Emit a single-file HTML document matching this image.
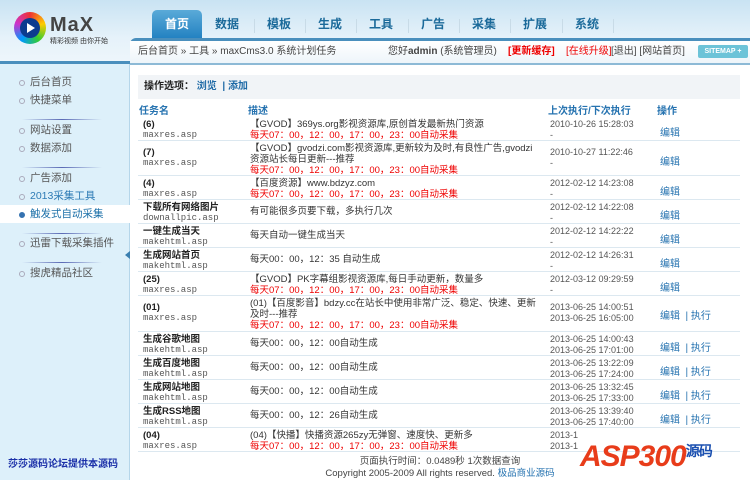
<!DOCTYPE html>
<html><head><meta charset="utf-8">
<style>
*{margin:0;padding:0;box-sizing:border-box}
body{width:750px;height:480px;overflow:hidden;font-family:"Liberation Sans","Noto Sans CJK SC",sans-serif;font-size:11px;color:#333;background:#fff;position:relative}
.hdr{position:absolute;left:0;top:0;width:750px;height:64px;background:linear-gradient(#c9e3f3,#e6f2fa 60%,#eef6fb)}
.logo{position:absolute;left:14px;top:12px;width:32px;height:32px;border-radius:50%;background:conic-gradient(#e33,#fc0,#3c3,#09f,#c3c,#e33)}
.logo i{position:absolute;left:6px;top:6px;width:20px;height:20px;border-radius:50%;background:#0c3b8f}
.logo b{position:absolute;left:13px;top:11px;border-left:8px solid #fff;border-top:5px solid transparent;border-bottom:5px solid transparent}
.lt{position:absolute;left:50px;top:14px;font:bold 20px "Liberation Sans",sans-serif;color:#444;letter-spacing:1px}
.ls{position:absolute;left:50px;top:36px;font-size:7px;color:#333}
.tabs{position:absolute;left:152px;top:10px;height:30px}
.tab{position:absolute;top:0;height:30px;line-height:28px;font-size:12px;font-weight:bold;color:#1b6a9a;text-align:center;width:50px}
.tab.on{background:linear-gradient(#5aaad8,#1f7fc0);color:#fff;border-radius:5px 5px 0 0}
.sep{position:absolute;top:9px;width:1px;height:14px;background:#c8dbe7}
.side{position:absolute;left:0;top:64px;width:130px;height:416px;background:#ddf0fa;border-right:1px solid #b5d6ea}
.lbar{position:absolute;left:0;top:61px;width:130px;height:4px;background:#4a8fbd}
.side ul{list-style:none;position:absolute;left:0;width:130px}
.side li{height:18px;line-height:18px;padding-left:30px;font-size:10.5px;color:#555;position:relative}
.side li:before{content:"";position:absolute;left:19px;top:7px;width:4px;height:4px;border:1px solid #aab;border-radius:50%}
.side li.on{background:#fff;color:#1a6fa8}
.side li.on:before{background:#3572b0;border-color:#3572b0}
.side li.bl{color:#2d7bb5}
.hr{position:absolute;left:22px;width:80px;height:1px;background:linear-gradient(90deg,transparent,#5a6ab5,transparent)}
.sbot{position:absolute;left:8px;top:455px;font-size:10px;font-weight:bold;color:#1a2fa8}
.arrow{position:absolute;left:125px;top:251px;border-right:5px solid #3a7fb0;border-top:4px solid transparent;border-bottom:4px solid transparent}
.main{position:absolute;left:130px;top:38px;width:620px;height:442px;background:#fff;border-top:3px solid #4a8fbd;border-radius:6px 0 0 0}
.bc{position:absolute;left:0;top:0;width:620px;height:24px;background:linear-gradient(#fff,#eef5fa);border-bottom:2px solid #8dbad6;line-height:22px;font-size:10px;color:#444}
.opt{position:absolute;left:8px;top:34px;width:602px;height:24px;background:#f1f4f7;line-height:24px;padding-left:6px;font-size:10px;font-weight:bold;color:#222}
.opt a{color:#1e6aa6}
.th{position:absolute;top:61px;font-size:10px;font-weight:bold;color:#2673b0}
.row{position:absolute;left:8px;width:602px;border-bottom:1px solid #dce8f0;font-size:9.5px}
.row div{position:absolute}
.n{left:5px;top:2px;line-height:11px;color:#222;font-weight:bold}
.n small{display:block;font-weight:normal;color:#555;font-size:9px;font-family:"Liberation Mono",monospace}
.d{left:112px;top:2px;width:290px;line-height:11px;color:#333}
.r{color:#e00}
.t{left:412px;top:2px;line-height:11px;color:#555;font-size:9px}
.o{left:522px;color:#2673b0;font-size:10px}
.foot{position:absolute;left:0;top:415px;width:620px;text-align:center;font-size:9.5px;color:#444;line-height:12px}
.asp{position:absolute;left:580px;top:440px;font:italic bold 30px "Liberation Sans",sans-serif;color:#e83c1a;letter-spacing:-1px}
</style></head><body>
<div class="hdr"></div>
<div class="logo"><i></i><b></b></div>
<div class="lt">MaX</div>
<div class="ls">精彩视频 由你开始</div>
<div class="tabs">
<div class="tab on" style="left:0">首页</div>
<div class="tab" style="left:50px">数据</div><div class="sep" style="left:102px"></div>
<div class="tab" style="left:102px">模板</div><div class="sep" style="left:153px"></div>
<div class="tab" style="left:153px">生成</div><div class="sep" style="left:204px"></div>
<div class="tab" style="left:204px">工具</div><div class="sep" style="left:256px"></div>
<div class="tab" style="left:256px">广告</div><div class="sep" style="left:307px"></div>
<div class="tab" style="left:307px">采集</div><div class="sep" style="left:358px"></div>
<div class="tab" style="left:358px">扩展</div><div class="sep" style="left:410px"></div>
<div class="tab" style="left:410px">系统</div><div class="sep" style="left:461px"></div>
</div>
<div class="lbar"></div>
<div class="side">
<ul style="top:9px"><li>后台首页</li><li>快捷菜单</li></ul>
<div class="hr" style="top:55px"></div>
<ul style="top:57px"><li>网站设置</li><li>数据添加</li></ul>
<div class="hr" style="top:103px"></div>
<ul style="top:105px"><li>广告添加</li><li class="bl">2013采集工具</li><li class="on">触发式自动采集</li></ul>
<div class="hr" style="top:169px"></div>
<ul style="top:170px"><li>迅雷下载采集插件</li></ul>
<div class="hr" style="top:198px"></div>
<ul style="top:200px"><li>搜虎精品社区</li></ul>
</div>
<div class="sbot">莎莎源码论坛提供本源码</div>
<div class="arrow"></div>
<div class="main">
<div class="bc"><span style="position:absolute;left:8px">后台首页 » 工具 » maxCms3.0 系统计划任务</span>
<span style="position:absolute;left:258px">您好<b>admin</b> (系统管理员)</span>
<span style="position:absolute;left:378px;color:#e00;font-weight:bold">[更新缓存]</span>
<span style="position:absolute;left:436px;color:#e00">[在线升级]</span>
<span style="position:absolute;left:481px">[退出] [网站首页]</span>
<span style="position:absolute;left:568px;top:4px;width:50px;height:13px;line-height:13px;background:#6cc3d8;color:#fff;font-size:7px;font-weight:bold;text-align:center;border-radius:2px">SITEMAP +</span></div>
<div class="opt">操作选项： <a>浏览</a> &nbsp;<a>|</a> <a>添加</a></div>
<div class="th" style="left:9px">任务名</div>
<div class="th" style="left:118px">描述</div>
<div class="th" style="left:418px">上次执行/下次执行</div>
<div class="th" style="left:527px">操作</div>

<div class="row" style="top:76px;height:24px"><div class="n">(6)<small>maxres.asp</small></div><div class="d">【GVOD】369ys.org影视资源库,原创首发最新热门资源<br><span class="r">每天07：00，12：00，17：00，23：00自动采集</span></div><div class="t">2010-10-26 15:28:03<br>-</div><div class="o" style="top:7px">编辑</div></div>
<div class="row" style="top:100px;height:35px"><div class="n" style="top:6px">(7)<small>maxres.asp</small></div><div class="d">【GVOD】gvodzi.com影视资源库,更新较为及时,有良性广告,gvodzi资源站长每日更新---推荐<br><span class="r">每天07：00，12：00，17：00，23：00自动采集</span></div><div class="t" style="top:6px">2010-10-27 11:22:46<br>-</div><div class="o" style="top:12px">编辑</div></div>
<div class="row" style="top:135px;height:24px"><div class="n">(4)<small>maxres.asp</small></div><div class="d">【百度资源】www.bdzyz.com<br><span class="r">每天07：00，12：00，17：00，23：00自动采集</span></div><div class="t">2012-02-12 14:23:08<br>-</div><div class="o" style="top:7px">编辑</div></div>
<div class="row" style="top:159px;height:24px"><div class="n">下载所有网络图片<small>downallpic.asp</small></div><div class="d" style="top:6px">有可能很多页要下载，多执行几次</div><div class="t">2012-02-12 14:22:08<br>-</div><div class="o" style="top:7px">编辑</div></div>
<div class="row" style="top:183px;height:24px"><div class="n">一键生成当天<small>makehtml.asp</small></div><div class="d" style="top:6px">每天自动一键生成当天</div><div class="t">2012-02-12 14:22:22<br>-</div><div class="o" style="top:7px">编辑</div></div>
<div class="row" style="top:207px;height:24px"><div class="n">生成网站首页<small>makehtml.asp</small></div><div class="d" style="top:6px">每天00：00，12：35 自动生成</div><div class="t">2012-02-12 14:26:31<br>-</div><div class="o" style="top:7px">编辑</div></div>
<div class="row" style="top:231px;height:24px"><div class="n">(25)<small>maxres.asp</small></div><div class="d">【GVOD】PK字幕组影视资源库,每日手动更新，数量多<br><span class="r">每天07：00，12：00，17：00，23：00自动采集</span></div><div class="t">2012-03-12 09:29:59<br>-</div><div class="o" style="top:7px">编辑</div></div>
<div class="row" style="top:255px;height:36px"><div class="n" style="top:6px">(01)<small>maxres.asp</small></div><div class="d">(01)【百度影音】bdzy.cc在站长中使用非常广泛、稳定、快速、更新及时---推荐<br><span class="r">每天07：00，12：00，17：00，23：00自动采集</span></div><div class="t" style="top:6px">2013-06-25 14:00:51<br>2013-06-25 16:05:00</div><div class="o" style="top:11px">编辑 &nbsp;| 执行</div></div>
<div class="row" style="top:291px;height:24px"><div class="n">生成谷歌地图<small>makehtml.asp</small></div><div class="d" style="top:6px">每天00：00，12：00自动生成</div><div class="t">2013-06-25 14:00:43<br>2013-06-25 17:01:00</div><div class="o" style="top:7px">编辑 &nbsp;| 执行</div></div>
<div class="row" style="top:315px;height:24px"><div class="n">生成百度地图<small>makehtml.asp</small></div><div class="d" style="top:6px">每天00：00，12：00自动生成</div><div class="t">2013-06-25 13:22:09<br>2013-06-25 17:24:00</div><div class="o" style="top:7px">编辑 &nbsp;| 执行</div></div>
<div class="row" style="top:339px;height:24px"><div class="n">生成网站地图<small>makehtml.asp</small></div><div class="d" style="top:6px">每天00：00，12：00自动生成</div><div class="t">2013-06-25 13:32:45<br>2013-06-25 17:33:00</div><div class="o" style="top:7px">编辑 &nbsp;| 执行</div></div>
<div class="row" style="top:363px;height:24px"><div class="n">生成RSS地图<small>makehtml.asp</small></div><div class="d" style="top:6px">每天00：00，12：26自动生成</div><div class="t">2013-06-25 13:39:40<br>2013-06-25 17:40:00</div><div class="o" style="top:7px">编辑 &nbsp;| 执行</div></div>
<div class="row" style="top:387px;height:24px"><div class="n">(04)<small>maxres.asp</small></div><div class="d">(04)【快播】快播资源265zy无弹窗、速度快、更新多<br><span class="r">每天07：00，12：00，17：00，23：00自动采集</span></div><div class="t">2013-1<br>2013-1</div></div>
<div class="foot">页面执行时间：0.0489秒 1次数据查询<br>Copyright 2005-2009 All rights reserved. <span style="color:#2673b0">极品商业源码</span></div>
</div>
<div class="asp">ASP300<span style="font-size:14px;color:#1a4fb0;font-style:normal;position:relative;top:-10px">源码</span></div>
</body></html>
